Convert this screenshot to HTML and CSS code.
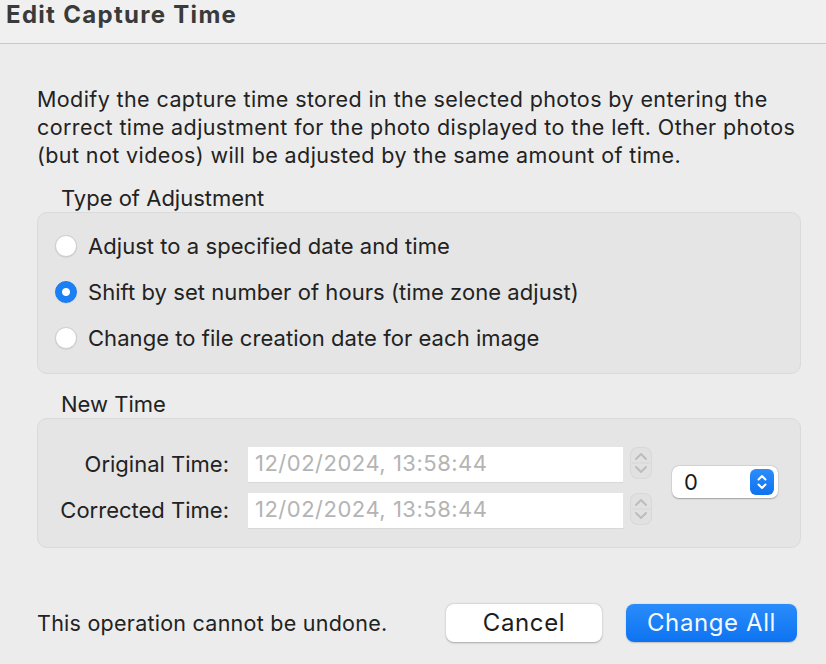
FILE: index.html
```html
<!DOCTYPE html>
<html>
<head>
<meta charset="utf-8">
<link rel="stylesheet" href="styles.css">
</head>
<body>
<div class="window">
  <div class="titlebar"><span class="title">Edit Capture Time</span></div>
  <div class="content">
    <p class="intro">Modify the capture time stored in the selected photos by entering the<br>correct time adjustment for the photo displayed to the left. Other photos<br>(but not videos) will be adjusted by the same amount of time.</p>

    <div class="group-label">Type of Adjustment</div>
    <div class="group radios">
      <label class="radio-row"><span class="radio"></span><span>Adjust to a specified date and time</span></label>
      <label class="radio-row"><span class="radio on"></span><span>Shift by set number of hours (time zone adjust)</span></label>
      <label class="radio-row"><span class="radio"></span><span>Change to file creation date for each image</span></label>
    </div>

    <div class="group-label second">New Time</div>
    <div class="group times">
      <div class="time-grid">
        <div class="tlabel">Original Time:</div>
        <div class="field">12/02/2024, 13:58:44</div>
        <div class="stepper">
          <svg width="22" height="32" viewBox="0 0 22 32"><path d="M6 12 L11 7 L16 12" fill="none" stroke="#bdbdbd" stroke-width="2" stroke-linecap="round" stroke-linejoin="round"/><line x1="2" y1="16" x2="20" y2="16" stroke="#d6d6d6" stroke-width="1"/><path d="M6 20 L11 25 L16 20" fill="none" stroke="#bdbdbd" stroke-width="2" stroke-linecap="round" stroke-linejoin="round"/></svg>
        </div>
        <div class="tlabel">Corrected Time:</div>
        <div class="field">12/02/2024, 13:58:44</div>
        <div class="stepper">
          <svg width="22" height="32" viewBox="0 0 22 32"><path d="M6 12 L11 7 L16 12" fill="none" stroke="#bdbdbd" stroke-width="2" stroke-linecap="round" stroke-linejoin="round"/><line x1="2" y1="16" x2="20" y2="16" stroke="#d6d6d6" stroke-width="1"/><path d="M6 20 L11 25 L16 20" fill="none" stroke="#bdbdbd" stroke-width="2" stroke-linecap="round" stroke-linejoin="round"/></svg>
        </div>
      </div>
      <div class="popup">
        <span class="popup-value">0</span>
        <span class="popup-arrows">
          <svg width="24" height="26" viewBox="0 0 24 26"><path d="M8.5 10.5 L12 7 L15.5 10.5" fill="none" stroke="#fff" stroke-width="2" stroke-linecap="round" stroke-linejoin="round"/><path d="M8.5 15.5 L12 19 L15.5 15.5" fill="none" stroke="#fff" stroke-width="2" stroke-linecap="round" stroke-linejoin="round"/></svg>
        </span>
      </div>
    </div>

    <div class="footer">
      <span class="warning">This operation cannot be undone.</span>
      <div class="buttons">
        <button class="btn cancel">Cancel</button>
        <button class="btn primary">Change All</button>
      </div>
    </div>
  </div>
</div>
</body>
</html>
```

FILE: styles.css
```css
html, body {
  margin: 0;
  padding: 0;
  background: #ececec;
}
.window {
  width: 826px;
  height: 664px;
  overflow: hidden;
  background: #ececec;
  color: #222;
  font-family: Inter, "Noto Sans", sans-serif;
}
.titlebar {
  height: 44px;
  box-sizing: border-box;
  background: #f0f0f0;
  border-bottom: 1px solid #c9c9c9;
  padding-left: 6px;
  display: flex;
  align-items: center;
}
.title {
  font-weight: 700;
  font-size: 24px;
  letter-spacing: 1.3px;
  color: #3a3a3a;
  margin-top: -15px;
}
.content {
  padding: 0 25px 0 37px;
}
.intro {
  margin: 41px 0 0 0;
  font-size: 21.5px;
  letter-spacing: 0.4px;
  line-height: 28px;
  color: #222;
  white-space: nowrap;
}
.group-label {
  font-size: 22px;
  color: #222;
  margin: 16px 0 0 24px;
  line-height: 26px;
}
.group-label.second {
  margin-top: 17px;
}
.group {
  box-sizing: border-box;
  width: 764px;
  margin-top: 1px;
  background: #e5e5e5;
  border: 1px solid #dadada;
  border-radius: 10px;
}
.radios {
  height: 162px;
  padding: 20px 0 0 17px;
  display: flex;
  flex-direction: column;
  gap: 20px;
}
.radio-row {
  display: flex;
  align-items: center;
  gap: 11px;
  font-size: 22px;
  letter-spacing: 0.05px;
  height: 26px;
  color: #222;
}
.radio {
  width: 22px;
  height: 22px;
  box-sizing: border-box;
  border-radius: 50%;
  background: #fff;
  border: 1px solid #cfcfcf;
  box-shadow: 0 0.5px 1px rgba(0,0,0,0.12);
  flex: none;
}
.radio.on {
  background: radial-gradient(circle, #fff 0 3.5px, #1b7ff6 4.5px);
  border: 1px solid #1a78ee;
}
.times {
  height: 130px;
  display: flex;
  align-items: flex-start;
  padding-top: 28px;
}
.time-grid {
  display: grid;
  grid-template-columns: 191px 376px 22px;
  grid-auto-rows: 36px;
  column-gap: 0;
  row-gap: 10px;
}
.tlabel {
  align-self: center;
  text-align: right;
  font-size: 22px;
  color: #222;
  margin-top: -3px;
}
.field {
  margin-left: 19px;
  width: 376px;
  height: 36px;
  box-sizing: border-box;
  background: #fff;
  border-bottom: 1px solid #d8d8d8;
  border-right: 1px solid #e6e6e6;
  font-size: 22px;
  color: #b4b4b4;
  padding: 3px 0 0 7px;
  letter-spacing: 0.5px;
}
.stepper {
  margin-left: 25px;
  width: 22px;
  height: 32px;
  border-radius: 8px;
  background: #e1e1e1;
  box-shadow: inset 0 0 0 1px #d8d8d8;
}
.stepper svg { display: block; }
.popup {
  margin-left: 45px;
  margin-top: 19px;
  width: 106px;
  height: 32px;
  box-sizing: border-box;
  background: #fff;
  border-radius: 7px;
  box-shadow: 0 0.5px 1.5px rgba(0,0,0,0.28), 0 0 0 0.5px rgba(0,0,0,0.06);
  display: flex;
  align-items: center;
  justify-content: space-between;
  padding: 0 4px 0 12px;
}
.popup-value {
  font-size: 22px;
  color: #1a1a1a;
}
.popup-arrows {
  width: 24px;
  height: 26px;
  border-radius: 6px;
  background: linear-gradient(#2c8dfb, #0f72ee);
}
.popup-arrows svg { display: block; }
.footer {
  display: flex;
  align-items: center;
  justify-content: space-between;
  margin-top: 56px;
  padding-right: 4px;
}
.warning {
  font-size: 21.5px;
  letter-spacing: 0.25px;
  color: #222;
}
.buttons {
  display: flex;
  gap: 24px;
}
.btn {
  height: 38px;
  border: none;
  border-radius: 8px;
  font-family: Inter, "Noto Sans", sans-serif;
  font-size: 24px;
  letter-spacing: 0.6px;
  padding: 0 0 2px 0;
}
.cancel {
  width: 156px;
  background: #fff;
  color: #1d1d1d;
  box-shadow: 0 0.5px 2px rgba(0,0,0,0.3);
}
.primary {
  width: 171px;
  background: linear-gradient(#2a8cfb, #0d73f0);
  color: #f4f8ff;
  box-shadow: 0 0.5px 1.5px rgba(0,0,0,0.2);
}
```
